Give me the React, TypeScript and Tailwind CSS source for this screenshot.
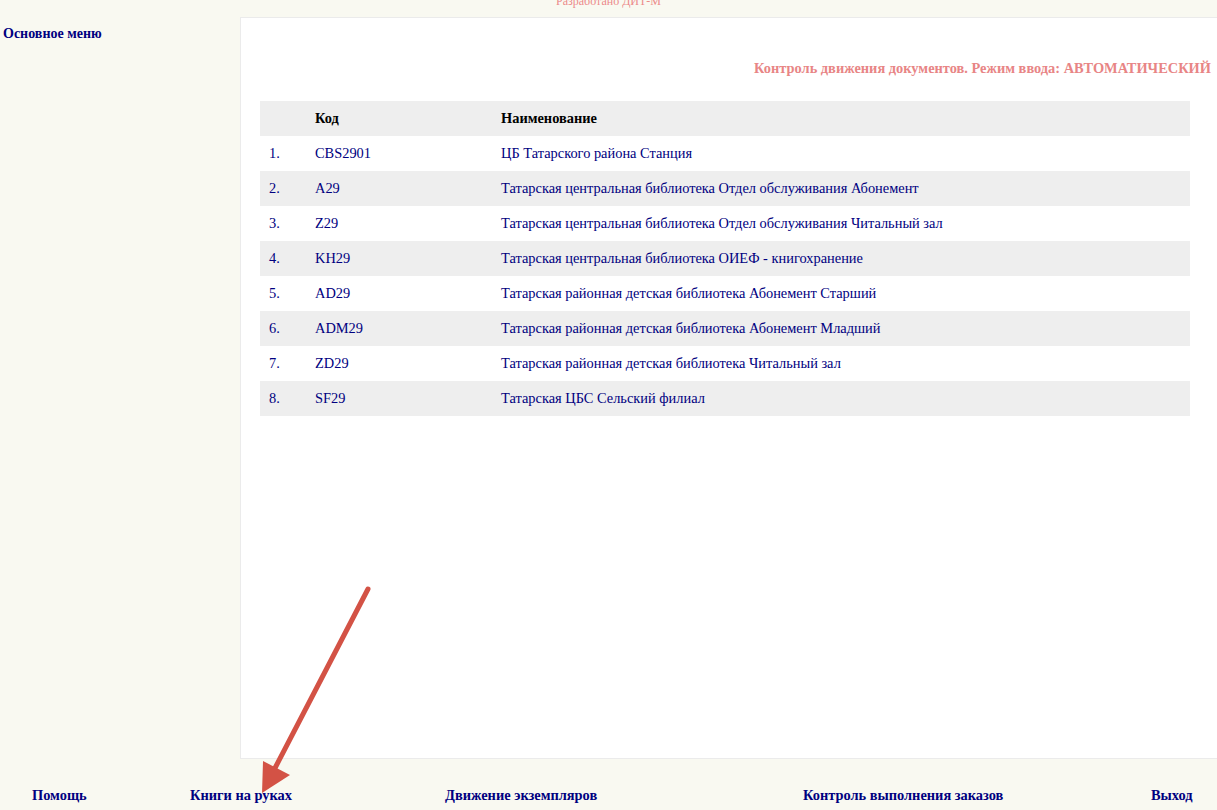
const units = [
  { code: "CBS2901", name: "ЦБ Татарского района Станция" },
  { code: "A29", name: "Татарская центральная библиотека Отдел обслуживания Абонемент" },
  { code: "Z29", name: "Татарская центральная библиотека Отдел обслуживания Читальный зал" },
  { code: "KH29", name: "Татарская центральная библиотека ОИЕФ - книгохранение" },
  { code: "AD29", name: "Татарская районная детская библиотека Абонемент Старший" },
  { code: "ADM29", name: "Татарская районная детская библиотека Абонемент Младший" },
  { code: "ZD29", name: "Татарская районная детская библиотека Читальный зал" },
  { code: "SF29", name: "Татарская ЦБС Сельский филиал" },
];

const footerLinks = [
  { label: "Помощь", cls: "w-[190px] pl-[32px]" },
  { label: "Книги на руках", cls: "w-[255px]" },
  { label: "Движение экземпляров", cls: "w-[358px]" },
  { label: "Контроль выполнения заказов", cls: "w-[348px]" },
  { label: "Выход", cls: "flex-1" },
];

const App = () => {
  return (
    <div className="relative h-[810px] w-[1217px] overflow-hidden bg-[#f9f9f1] font-['Liberation_Serif',serif] text-[14.4px]">
      <div className="flex h-[17px] items-end justify-center">
        <span className="relative top-[-10px] text-[12px] leading-none text-[#ec8a8a]">
          Разработано ДИТ-М
        </span>
      </div>

      <div className="flex h-[742px]">
        <div className="w-[240px] pl-[3px] pt-[6px]">
          <a className="font-bold text-[14px] text-[#000080]">Основное меню</a>
        </div>
        <div className="flex-1 border border-r-0 border-[#ebebeb] bg-white">
          <h1 className="pr-[6px] pt-[42px] text-right text-[14.4px] font-bold leading-[17px] text-[#e88585]">
            Контроль движения документов. Режим ввода: АВТОМАТИЧЕСКИЙ
          </h1>
          <table className="ml-[19px] mt-[24px] w-[930px] border-collapse">
            <thead>
              <tr className="h-[35px] bg-[#eeeeee] text-left">
                <th className="w-[55px]" />
                <th className="w-[186px] font-bold text-black">Код</th>
                <th className="font-bold text-black">Наименование</th>
              </tr>
            </thead>
            <tbody>
              {units.map((u, i) => (
                <tr
                  key={u.code}
                  className={`h-[35px] text-[#000080] ${i % 2 === 1 ? "bg-[#eeeeee]" : "bg-white"}`}
                >
                  <td className="pl-[9px]">{i + 1}.</td>
                  <td>{u.code}</td>
                  <td>{u.name}</td>
                </tr>
              ))}
            </tbody>
          </table>
        </div>
      </div>

      <div className="flex pt-[26px]">
        {footerLinks.map((l) => (
          <div key={l.label} className={l.cls}>
            <a className="font-bold text-[#000080]">{l.label}</a>
          </div>
        ))}
      </div>

      {/* annotation arrow */}
      <svg className="pointer-events-none absolute left-0 top-0" width="1217" height="810">
        <line x1="368" y1="589" x2="274" y2="770" stroke="#d35245" strokeWidth="5" strokeLinecap="round" />
        <polygon points="262,793 263,761 290,775" fill="#d35245" />
      </svg>
    </div>
  );
};

export default App;
